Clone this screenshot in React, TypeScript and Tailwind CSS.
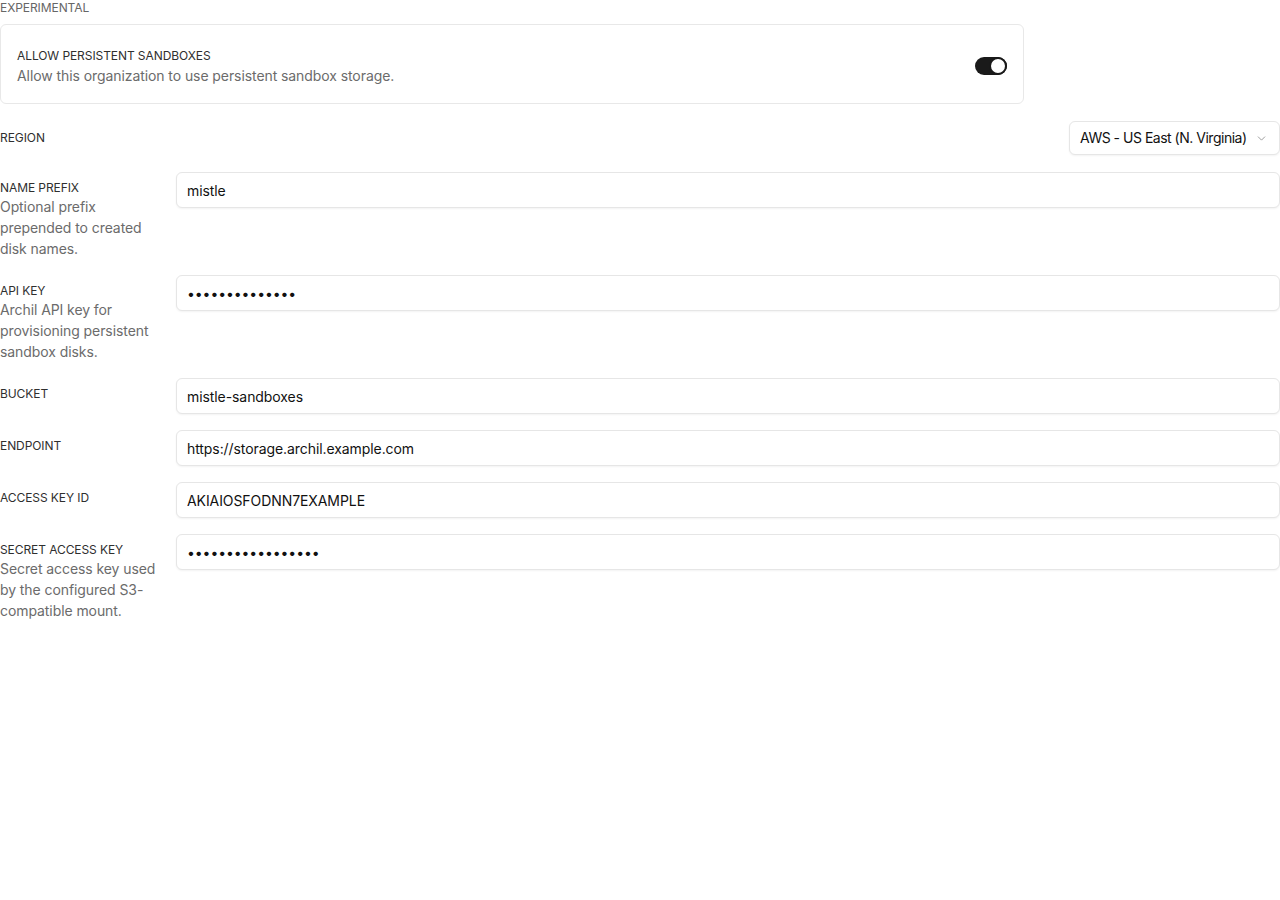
import { ChevronDown } from 'lucide-react';

const font = { fontFamily: 'Inter, "Noto Sans", sans-serif' };

function Label({ title, hint }: { title: string; hint?: string }) {
  return (
    <div className="w-40 shrink-0 pt-2">
      <p className="text-xs leading-4 uppercase text-[#2f2f2f]">{title}</p>
      {hint && <p className="text-sm leading-[21px] text-[#6b6b6b]">{hint}</p>}
    </div>
  );
}

function TextRow({
  title,
  hint,
  value,
  secret,
}: {
  title: string;
  hint?: string;
  value: string;
  secret?: boolean;
}) {
  return (
    <div className="flex gap-4">
      <Label title={title} hint={hint} />
      <input
        type={secret ? 'password' : 'text'}
        defaultValue={value}
        className="flex-1 h-9 px-[10px] rounded-md border border-[#e6e6e6] bg-white text-sm text-[#111] shadow-[0_1px_2px_rgba(0,0,0,0.05)] focus:outline-none"
      />
    </div>
  );
}

function Toggle({ on }: { on: boolean }) {
  return (
    <span
      className={`relative inline-flex w-8 h-[18px] rounded-full ${on ? 'bg-[#1a1a1a]' : 'bg-[#d4d4d4]'}`}
    >
      <span
        className={`absolute top-0 w-[18px] h-[18px] rounded-full bg-white border-2 border-[#1a1a1a] ${
          on ? 'right-0' : 'left-0'
        }`}
      />
    </span>
  );
}

export default function App() {
  return (
    <div className="min-h-screen bg-white tracking-[-0.005em]" style={font}>
      <section>
        <h2 className="text-xs leading-4 uppercase text-[#666]">Experimental</h2>
        <div className="mt-2 w-[1024px] flex items-center justify-between rounded-md border border-[#e8e8e8] px-4 pt-[21px] pb-[17px]">
          <div>
            <p className="text-xs leading-5 uppercase text-[#2f2f2f]">Allow persistent sandboxes</p>
            <p className="text-sm leading-5 text-[#6b6b6b]">
              Allow this organization to use persistent sandbox storage.
            </p>
          </div>
          <Toggle on />
        </div>
      </section>

      <div className="mt-[17px] flex flex-col gap-4">
        <div className="flex items-center justify-between mb-px">
          <p className="text-xs leading-4 uppercase text-[#2f2f2f]">Region</p>
          <button className="h-[34px] w-[211px] flex items-center justify-between pl-[10px] pr-[11px] whitespace-nowrap rounded-md border border-[#e6e6e6] bg-white text-sm tracking-[-0.035em] text-[#111] shadow-[0_1px_2px_rgba(0,0,0,0.05)]">
            <span>AWS - US East (N. Virginia)</span>
            <ChevronDown className="w-[13px] h-[13px] text-[#888]" strokeWidth={1.5} />
          </button>
        </div>

        <TextRow title="Name prefix" hint="Optional prefix prepended to created disk names." value="mistle" />
        <TextRow
          title="API key"
          hint="Archil API key for provisioning persistent sandbox disks."
          value="archilkey12345"
          secret
        />
        <TextRow title="Bucket" value="mistle-sandboxes" />
        <TextRow title="Endpoint" value="https://storage.archil.example.com" />
        <TextRow title="Access key ID" value="AKIAIOSFODNN7EXAMPLE" />
        <TextRow
          title="Secret access key"
          hint="Secret access key used by the configured S3-compatible mount."
          value="wJalrXUtnFEMIK7MD"
          secret
        />
      </div>
    </div>
  );
}
